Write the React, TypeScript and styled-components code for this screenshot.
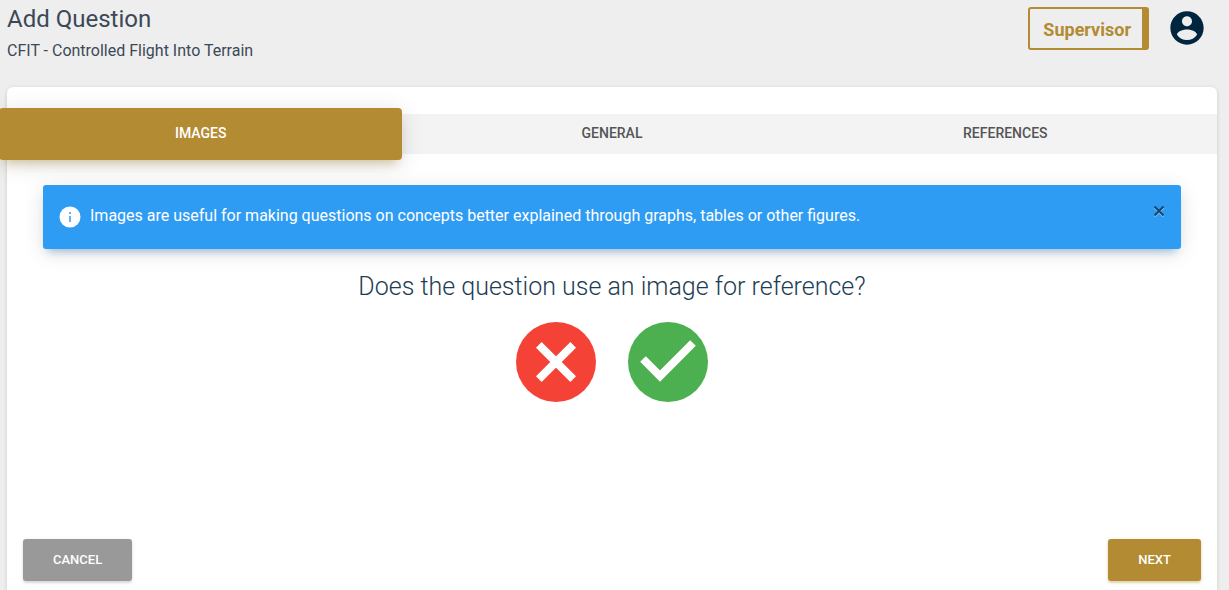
import React, { useState } from "react";
import styled, { createGlobalStyle, css } from "styled-components";

const gold = "#b28b32";
const navy = "#00253e";

const GlobalStyle = createGlobalStyle`
  *, *::before, *::after { box-sizing: border-box; }
  body {
    margin: 0;
    background: #eeeeee;
    font-family: Roboto, "Liberation Sans", sans-serif;
    color: #3c4858;
    overflow-x: hidden;
  }
  button { font-family: inherit; border: 0; padding: 0; cursor: pointer; }
`;

const Page = styled.div`
  display: flex;
  flex-direction: column;
  min-height: 100vh;
  padding: 0 12px 0 7px;
`;

const Header = styled.header`
  display: flex;
  justify-content: space-between;
  align-items: flex-start;
  height: 87px;
`;

const Title = styled.h1`
  margin: 4px 0 0;
  font-size: 24px;
  line-height: 30px;
  font-weight: 400;
`;

const Subtitle = styled.p`
  margin: 7px 0 0;
  font-size: 16px;
  line-height: 20px;
  font-weight: 400;
`;

const Account = styled.div`
  display: flex;
  align-items: center;
  gap: 18px;
  padding: 7px 10px 0 0;
`;

const RoleButton = styled.button`
  height: 43px;
  padding: 2px 11px 0 13px;
  border: 2px solid ${gold};
  border-right-width: 7px;
  border-radius: 3px;
  background: transparent;
  color: ${gold};
  font-size: 18px;
  font-weight: 700;
`;

const AvatarButton = styled.button`
  display: flex;
  padding-bottom: 2px;
  background: transparent;
  color: ${navy};
`;

const Card = styled.main`
  display: flex;
  flex: 1;
  flex-direction: column;
  padding-top: 27px;
  border-radius: 6px 6px 0 0;
  background: #ffffff;
  box-shadow: 0 1px 4px rgba(0, 0, 0, 0.14);
`;

const Tabs = styled.div`
  display: grid;
  grid-template-columns: repeat(3, 1fr);
  height: 40px;
  background: #f3f3f3;
`;

const Tab = styled.button<{ $active?: boolean; $last?: boolean }>`
  background: transparent;
  color: #555555;
  font-size: 14px;
  line-height: 20px;
  font-weight: 500;
  text-transform: uppercase;
  padding: 0 ${(p) => (p.$last ? 20 : 0)}px 2px 0;
  ${(p) =>
    p.$active &&
    css`
      margin: -6px 8px -6px -8px;
      border-radius: 4px;
      background: ${gold};
      color: #ffffff;
      box-shadow: 0 4px 25px 0 rgba(0, 0, 0, 0.12),
        0 8px 10px -5px rgba(178, 139, 50, 0.4);
    `}
`;

const Alert = styled.div`
  display: flex;
  align-items: flex-start;
  margin: 31px 36px 0;
  height: 64px;
  padding: 20px 16px;
  border-radius: 3px;
  background: #2f9cf4;
  color: #ffffff;
  box-shadow: 0 4px 20px 0 rgba(0, 0, 0, 0.12),
    0 7px 8px -5px rgba(0, 100, 180, 0.35);
`;

const AlertText = styled.p`
  flex: 1;
  margin: 1px 0 0 9px;
  font-size: 16px;
  line-height: 20px;
  font-weight: 400;
`;

const CloseButton = styled.button`
  display: flex;
  background: transparent;
  color: #15466e;
  filter: drop-shadow(0 1px 0 #8cc8fa);
`;

const Question = styled.h2`
  margin: 22px 0 0;
  font-size: 25px;
  line-height: 32px;
  font-weight: 300;
  text-align: center;
  color: #1c3d54;
`;

const Choices = styled.div`
  display: flex;
  justify-content: center;
  gap: 32px;
  margin-top: 19px;
`;

const Choice = styled.button<{ $color: string }>`
  display: flex;
  width: 80px;
  height: 80px;
  border-radius: 50%;
  background: ${(p) => p.$color};
  color: #ffffff;
`;

const Footer = styled.footer`
  display: flex;
  justify-content: space-between;
  margin-top: auto;
  padding: 24px 16px 9px;
`;

const ActionButton = styled.button<{ $color: string }>`
  height: 42px;
  padding: 0 30px 1px;
  border-radius: 3px;
  background: ${(p) => p.$color};
  color: #ffffff;
  font-size: 13px;
  font-weight: 500;
  text-transform: uppercase;
  box-shadow: 0 2px 2px 0 ${(p) => p.$color}44, 0 1px 4px 0 ${(p) => p.$color}33;
`;

const tabNames = ["Images", "General", "References"];

export default function App() {
  const [active, setActive] = useState(0);
  const [alertOpen, setAlertOpen] = useState(true);

  return (
    <>
      <GlobalStyle />
      <Page>
        <Header>
          <div>
            <Title>Add Question</Title>
            <Subtitle>CFIT - Controlled Flight Into Terrain</Subtitle>
          </div>
          <Account>
            <RoleButton type="button">Supervisor</RoleButton>
            <AvatarButton type="button" aria-label="Account">
              <svg width="40" height="40" viewBox="0 0 24 24" fill="currentColor">
                <path d="M12 2C6.48 2 2 6.48 2 12s4.48 10 10 10 10-4.48 10-10S17.520 2 12 2zm0 3c1.660 0 3 1.340 3 3s-1.340 3-3 3-3-1.340-3-3 1.340-3 3-3zm0 14.200c-2.500 0-4.710-1.280-6-3.220.03-1.990 4-3.080 6-3.080 1.990 0 5.970 1.090 6 3.080-1.290 1.940-3.500 3.220-6 3.220z" />
              </svg>
            </AvatarButton>
          </Account>
        </Header>

        <Card>
          <Tabs role="tablist">
            {tabNames.map((name, i) => (
              <Tab
                key={name}
                type="button"
                role="tab"
                aria-selected={i === active}
                $active={i === active}
                $last={i === tabNames.length - 1}
                onClick={() => setActive(i)}
              >
                {name}
              </Tab>
            ))}
          </Tabs>

          {alertOpen && (
            <Alert role="status">
              <svg width="22" height="24" viewBox="0 0 22 24">
                <circle cx="11" cy="12" r="10.500" fill="#ffffff" />
                <path d="M10 7h2v2h-2zM10 11h2v6h-2z" fill="#5fb3f6" />
              </svg>
              <AlertText>
                Images are useful for making questions on concepts better explained
                through graphs, tables or other figures.
              </AlertText>
              <CloseButton type="button" aria-label="Close" onClick={() => setAlertOpen(false)}>
                <svg width="12" height="12" viewBox="0 0 12 12">
                  <path d="M1.500 1.500l9 9M10.500 1.500l-9 9" stroke="currentColor" strokeWidth="2" />
                </svg>
              </CloseButton>
            </Alert>
          )}

          <Question>Does the question use an image for reference?</Question>
          <Choices>
            <Choice type="button" aria-label="No" $color="#f44336">
              <svg width="80" height="80" viewBox="0 0 80 80">
                <path d="M22.800 22.800L57.200 57.200M57.200 22.800L22.800 57.200" stroke="currentColor" strokeWidth="8" />
              </svg>
            </Choice>
            <Choice type="button" aria-label="Yes" $color="#4caf50">
              <svg width="80" height="80" viewBox="0 0 80 80" fill="none">
                <path d="M15 37L32 54L65 21" stroke="currentColor" strokeWidth="8" />
              </svg>
            </Choice>
          </Choices>

          <Footer>
            <ActionButton type="button" $color="#999999">Cancel</ActionButton>
            <ActionButton type="button" $color={gold}>Next</ActionButton>
          </Footer>
        </Card>
      </Page>
    </>
  );
}
